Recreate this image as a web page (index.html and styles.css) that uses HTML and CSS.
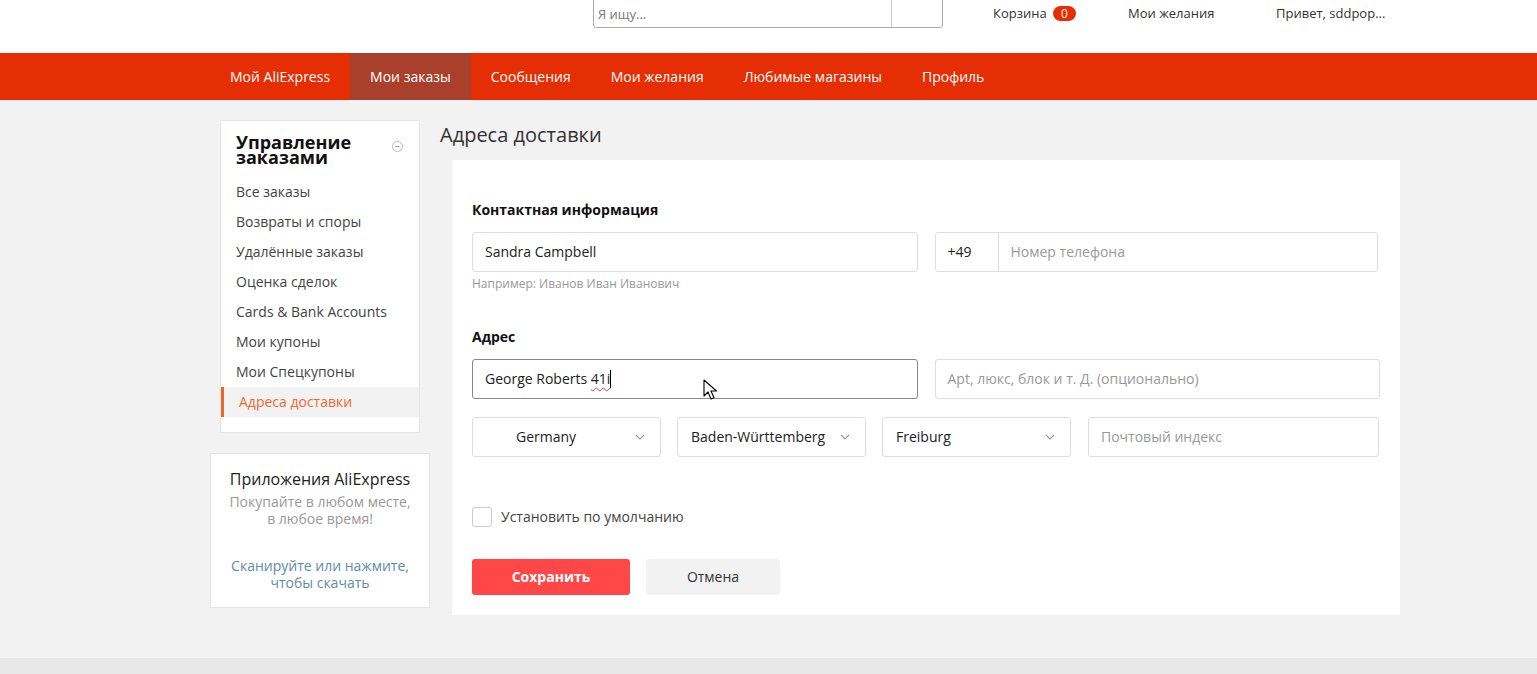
FILE: index.html
```
<!DOCTYPE html>
<html>
  <head>
    <title>Адреса доставки</title>
    <meta charset="utf-8">
    <meta name="viewport" content="width=device-width, initial-scale=1">
    <link rel="stylesheet" href="styles.css">
  </head>
  <body>
    <div class="top">
      <div class="top-inner">
        <div class="search">
          <div class="search-field">Я ищу...</div>
          <div class="search-btn"></div>
        </div>
        <div class="top-links">
          <span class="cart">Корзина <b class="badge">0</b></span>
          <span class="wish">Мои желания</span>
          <span class="hello">Привет, sddpop...</span>
        </div>
      </div>
    </div>

    <div class="nav">
      <div class="wrap nav-inner">
        <a>Мой AliExpress</a>
        <a class="active">Мои заказы</a>
        <a>Сообщения</a>
        <a>Мои желания</a>
        <a>Любимые магазины</a>
        <a>Профиль</a>
      </div>
    </div>

    <div class="page">
      <div class="wrap page-inner">
        <!-- left column -->
        <div class="side">
          <div class="side-menu">
            <div class="side-title">
              <h2>Управление заказами</h2>
              <svg class="collapse" width="11" height="11" viewBox="0 0 11 11"><circle cx="5.5" cy="5.5" r="5" fill="none" stroke="#bbb"/><line x1="3.5" y1="5.5" x2="7.5" y2="5.5" stroke="#999"/></svg>
            </div>
            <ul>
              <li>Все заказы</li>
              <li>Возвраты и споры</li>
              <li>Удалённые заказы</li>
              <li>Оценка сделок</li>
              <li>Cards &amp; Bank Accounts</li>
              <li>Мои купоны</li>
              <li>Мои Спецкупоны</li>
              <li class="current">Адреса доставки</li>
            </ul>
          </div>
          <div class="app-box">
            <div class="app-title">Приложения AliExpress</div>
            <div class="app-sub">Покупайте в любом месте,<br>в любое время!</div>
            <div class="app-link">Сканируйте или нажмите,<br>чтобы скачать</div>
          </div>
        </div>

        <!-- main column -->
        <div class="main">
          <h1>Адреса доставки</h1>
          <div class="panel">
            <div class="label">Контактная информация</div>
            <div class="row">
              <div class="col">
                <div class="field">Sandra Campbell</div>
                <div class="hint">Например: Иванов Иван Иванович</div>
              </div>
              <div class="col">
                <div class="field phone">
                  <span class="prefix">+49</span>
                  <span class="ph">Номер телефона</span>
                </div>
              </div>
            </div>

            <div class="label addr">Адрес</div>
            <div class="row">
              <div class="col">
                <div class="field focus">George Roberts <span class="typo">41i</span><span class="caret"></span></div>
              </div>
              <div class="col">
                <div class="field wide ph">Apt, люкс, блок и т. Д. (опционально)</div>
              </div>
            </div>

            <div class="row four">
              <div class="select country">Germany
                <svg class="chev" width="10" height="6" viewBox="0 0 10 6"><path d="M1 1l4 4 4-4" fill="none" stroke="#999" stroke-width="1.1"/></svg>
              </div>
              <div class="select">Baden-Württemberg
                <svg class="chev" width="10" height="6" viewBox="0 0 10 6"><path d="M1 1l4 4 4-4" fill="none" stroke="#999" stroke-width="1.1"/></svg>
              </div>
              <div class="select">Freiburg
                <svg class="chev" width="10" height="6" viewBox="0 0 10 6"><path d="M1 1l4 4 4-4" fill="none" stroke="#999" stroke-width="1.1"/></svg>
              </div>
              <div class="field zip ph">Почтовый индекс</div>
            </div>

            <label class="check"><span class="box"></span>Установить по умолчанию</label>

            <div class="buttons">
              <button class="save">Сохранить</button>
              <button class="cancel">Отмена</button>
            </div>

            <svg class="pointer" width="14" height="22" viewBox="0 0 14 22"><path d="M1 1v16l4-4 3 7 3-1.3-3-6.7h5.5z" fill="#fff" stroke="#000" stroke-width="1.1" stroke-linejoin="round"/></svg>
          </div>
        </div>
      </div>
    </div>
    <div class="footer"></div>
  </body>
</html>
```

FILE: styles.css
```
body {
  margin: 0;
  background: #f2f2f2;
  color: #333;
  font: 14px/1.4 'Open Sans', sans-serif;
}

.wrap {
  width: 1190px;
  margin-left: 210px;
}

/* header */
.top {
  background: white;
  height: 53px;
}

.top-inner {
  display: flex;
  margin-left: 593px;
}

.search {
  display: flex;
  height: 28px;
  margin-top: -2px;
  border: 1px solid #aaa;
  border-radius: 0 0 3px 3px;
  width: 348px;
}

.search-field {
  flex: 1;
  padding: 6px 4px 0;
  color: #777;
  font-size: 13px;
  border-right: 1px solid #ccc;
}

.search-btn {
  width: 50px;
}

.top-links {
  display: flex;
  font-size: 13px;
  color: #333;
  padding-top: 4px;
  margin-left: 50px;
}

.cart {
  width: 135px;
}

.badge {
  display: inline-block;
  background: #e62e04;
  color: white;
  font-weight: normal;
  font-size: 12px;
  line-height: 15px;
  padding: 0 8px;
  border-radius: 8px;
  margin-left: 3px;
}

.wish {
  width: 148px;
}

/* nav */
.nav {
  background: #e62e04;
  height: 47px;
}

.nav-inner {
  display: flex;
}

.nav a {
  color: white;
  font-size: 14px;
  line-height: 47px;
  padding: 0 20px;
}

.nav a.active {
  background: #a8402c;
}

/* page */
.page {
  height: 558px;
}

.page-inner {
  display: flex;
}

.side {
  width: 220px;
  padding-top: 20px;
}

.side-menu {
  margin: 0 10px;
  background: white;
  border: 1px solid #e6e6e6;
  padding: 14px 0 15px;
}

.side-title {
  display: flex;
  justify-content: space-between;
  padding: 0 16px 0 15px;
}

.side-title h2 {
  margin: 0;
  font-size: 18px;
  font-weight: bold;
  line-height: 15px;
  width: 130px;
  color: #111;
}

.collapse {
  margin-top: 6px;
}

.side-menu ul {
  list-style: none;
  margin: 12px 0 0;
  padding: 0;
}

.side-menu li {
  height: 30px;
  line-height: 30px;
  padding-left: 15px;
  color: #444;
}

.side-menu li.current {
  background: #f2f2f2;
  border-left: 3px solid #e8692d;
  padding-left: 15px;
  color: #ec6a2f;
}

.app-box {
  margin-top: 20px;
  background: white;
  border: 1px solid #e6e6e6;
  text-align: center;
  padding: 14px 0 14px;
  height: 125px;
}

.app-title {
  font-size: 16px;
  color: #222;
}

.app-sub {
  color: #999;
  line-height: 17px;
  margin-top: 3px;
}

.app-link {
  color: #5b8ea6;
  line-height: 17px;
  margin-top: 30px;
}

/* main */
.main {
  flex: 1;
  padding-left: 10px;
}

.main h1 {
  font-size: 20px;
  font-weight: normal;
  color: #333;
  margin: 20px 0 0;
  line-height: 30px;
}

.panel {
  position: relative;
  margin: 10px 0 0 12px;
  background: white;
  padding: 40px 20px 20px;
  height: 395px;
}

.label {
  font-weight: bold;
  color: #111;
  font-size: 14px;
  height: 22px;
}

.label.addr {
  margin-top: 34px;
}

.row {
  display: flex;
  gap: 17px;
  margin-top: 10px;
}

.col {
  flex: 1;
}

.field {
  box-sizing: border-box;
  height: 40px;
  border: 1px solid #ddd;
  border-radius: 3px;
  padding: 0 12px;
  line-height: 38px;
  color: #222;
}

.ph {
  color: #999;
}

.hint {
  font-size: 12px;
  color: #999;
  margin-top: 4px;
}

.phone {
  display: flex;
  padding: 0;
  margin-right: 2px;
}

.prefix {
  width: 50px;
  padding-left: 12px;
  border-right: 1px solid #ddd;
}

.phone .ph {
  padding-left: 12px;
}

.focus {
  border-color: #888;
}

.typo {
  text-decoration: underline wavy #e33;
  text-decoration-thickness: 1px;
  text-underline-offset: 3px;
}

.caret {
  display: inline-block;
  width: 1px;
  height: 18px;
  background: #000;
  vertical-align: -4px;
}

.four {
  gap: 16px;
  margin-top: 18px;
}

.select {
  position: relative;
  box-sizing: border-box;
  width: 189px;
  height: 40px;
  border: 1px solid #ddd;
  border-radius: 3px;
  padding-left: 13px;
  line-height: 38px;
  color: #222;
}

.select.country {
  padding-left: 43px;
}

.chev {
  position: absolute;
  right: 15px;
  top: 16px;
}

.zip {
  flex: 1;
  margin-left: 1px;
  margin-right: 1px;
}

.check {
  display: flex;
  align-items: center;
  margin-top: 50px;
  color: #444;
}

.box {
  width: 18px;
  height: 18px;
  border: 1px solid #ccc;
  border-radius: 3px;
  margin-right: 9px;
}

.buttons {
  display: flex;
  gap: 16px;
  margin-top: 32px;
}

.buttons button {
  height: 36px;
  border: 0;
  border-radius: 3px;
  font: 14px 'Open Sans', sans-serif;
}

.save {
  width: 158px;
  background: #ff4747;
  color: white;
  font-weight: bold !important;
}

.cancel {
  width: 134px;
  background: #f2f2f2;
  color: #333;
}

.pointer {
  position: absolute;
  left: 251px;
  top: 219px;
}

.footer {
  background: #e8e8e8;
  height: 16px;
}
```
